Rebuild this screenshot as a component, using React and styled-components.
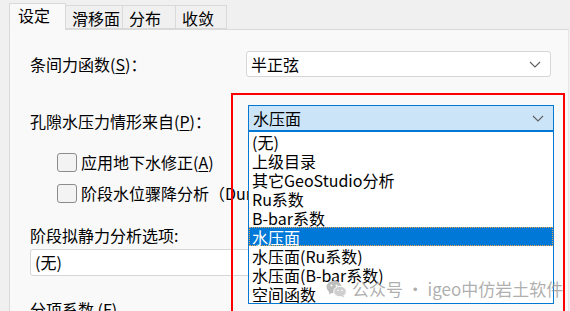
import styled, { createGlobalStyle } from 'styled-components'

const GlobalStyle = createGlobalStyle`
    html, body {
        margin: 0;
        padding: 0;
        background: #f0f0f0;
    }
    body {
        font-family: 'Noto Sans CJK SC', 'Noto Sans', sans-serif;
        font-size: 16px;
        color: #000;
    }
`

const tabs = [
    { label: '设定', width: 57, active: true },
    { label: '滑移面', width: 58 },
    { label: '分布', width: 54 },
    { label: '收敛', width: 52 },
]

const options = [
    '(无)',
    '上级目录',
    '其它GeoStudio分析',
    'Ru系数',
    'B-bar系数',
    '水压面',
    '水压面(Ru系数)',
    '水压面(B-bar系数)',
    '空间函数',
]

function Chevron() {
    return (
        <svg width="12" height="7" viewBox="0 0 12 7">
            <polyline
                points="1,1 6,6 11,1"
                fill="none"
                stroke="#5f5f5f"
                strokeWidth="1.1"
            />
        </svg>
    )
}

function WeChatMark() {
    return (
        <svg width="21" height="18" viewBox="0 0 21 18">
            <ellipse cx="8" cy="7" rx="7.5" ry="6.3" fill="#bdbdbd" />
            <path d="M3.5 11.5 L2.8 14.5 L6.5 12.6 Z" fill="#bdbdbd" />
            <ellipse cx="14" cy="11.5" rx="6.3" ry="5.3" fill="#cfcfcf" stroke="#fff" strokeWidth="1" />
            <path d="M17.5 15.5 L18.5 17.8 L15.5 16.3 Z" fill="#cfcfcf" />
            <circle cx="5.5" cy="5.5" r="1" fill="#fff" />
            <circle cx="10.5" cy="5.5" r="1" fill="#fff" />
            <circle cx="12" cy="10.5" r="0.8" fill="#fff" />
            <circle cx="16" cy="10.5" r="0.8" fill="#fff" />
        </svg>
    )
}

export default function App() {
    return (
        <Window>
            <GlobalStyle />
            <TabStrip>
                {tabs.map((t) => (
                    <Tab key={t.label} $active={t.active} $w={t.width}>
                        {t.label}
                    </Tab>
                ))}
            </TabStrip>

            <Panel>
                <FieldRow $top={21}>
                    <Label>
                        条间力函数(<U>S</U>)：
                    </Label>
                    <Combo>
                        <ComboText>半正弦</ComboText>
                        <Chevron />
                    </Combo>
                </FieldRow>

                <FieldRow $top={28}>
                    <Label $nudge={7}>
                        孔隙水压力情形来自(<U>P</U>)：
                    </Label>
                    <DropWrap>
                        <Combo $open>
                            <ComboText>水压面</ComboText>
                            <Chevron />
                        </Combo>
                        <OptionList>
                            {options.map((o, i) => (
                                <OptionItem key={o} $selected={i === 5}>
                                    {o}
                                </OptionItem>
                            ))}
                        </OptionList>
                        <Highlight />
                    </DropWrap>
                </FieldRow>

                <CheckRow $top={21}>
                    <CheckBox />
                    <span>
                        应用地下水修正(<U>A</U>)
                    </span>
                </CheckRow>
                <CheckRow $top={10}>
                    <CheckBox />
                    <span>阶段水位骤降分析（Duncan、Wright 和 Wong，1990）</span>
                </CheckRow>

                <Label $top={22}>阶段拟静力分析选项:</Label>
                <WideCombo>
                    <ComboText>(无)</ComboText>
                </WideCombo>

                <Label $top={24}>分项系数 (F)</Label>
            </Panel>

            <Watermark>
                <WeChatMark />
                <span>公众号 · igeo中仿岩土软件</span>
            </Watermark>
        </Window>
    )
}

const Window = styled.div`
    position: relative;
    width: 570px;
    height: 311px;
    overflow: hidden;
    background: #f0f0f0;
    display: flex;
    flex-direction: column;
`

const TabStrip = styled.div`
    display: flex;
    align-items: flex-end;
    height: 29px;
    padding-left: 9px;
    flex-shrink: 0;
    position: relative;
    z-index: 1;
`

const Tab = styled.div`
    box-sizing: border-box;
    width: ${(p) => p.$w}px;
    height: ${(p) => (p.$active ? 27 : 24)}px;
    margin-bottom: ${(p) => (p.$active ? -1 : 0)}px;
    padding-left: ${(p) => (p.$active ? 8 : 6)}px;
    padding-top: ${(p) => (p.$active ? 2 : 3)}px;
    line-height: 19px;
    font-size: 16px;
    background: ${(p) => (p.$active ? '#f9f9f9' : '#f0f0f0')};
    border: 1px solid #d9d9d9;
    border-bottom: ${(p) => (p.$active ? 'none' : '1px solid #d9d9d9')};
    margin-left: ${(p) => (p.$active ? 0 : -1)}px;
    white-space: nowrap;
`

const Panel = styled.div`
    flex: 1;
    margin-left: 9px;
    margin-right: 1px;
    padding-left: 20px;
    background: #f9f9f9;
    border-left: 1px solid #dadada;
    border-top: 1px solid #dadada;
    border-right: 1px solid #e6e6e6;
    display: flex;
    flex-direction: column;
    align-items: flex-start;
`

const FieldRow = styled.div`
    display: grid;
    grid-template-columns: 216px auto;
    align-items: ${(p) => (p.$align ? p.$align : 'center')};
    margin-top: ${(p) => p.$top}px;
`

const Label = styled.div`
    line-height: 19px;
    white-space: nowrap;
    margin-top: ${(p) => p.$top || 0}px;
    padding-top: ${(p) => p.$nudge || 0}px;
`

const U = styled.span`
    text-decoration: underline;
    text-underline-offset: 2px;
`

const Combo = styled.div`
    box-sizing: border-box;
    width: ${(p) => (p.$open ? 306 : 305)}px;
    height: 26px;
    margin-left: ${(p) => (p.$open ? 2 : 0)}px;
    padding: 0 9px 0 4px;
    display: flex;
    align-items: center;
    justify-content: space-between;
    background: ${(p) => (p.$open ? '#cce4f7' : '#ffffff')};
    border: 1px solid ${(p) => (p.$open ? '#0078d4' : '#d6d6d6')};
    border-radius: ${(p) => (p.$open ? 0 : 3)}px;
`

const ComboText = styled.span`
    line-height: 19px;
    white-space: nowrap;
`

const WideCombo = styled(Combo)`
    width: 521px;
    height: 27px;
    margin-top: 4px;
`

const DropWrap = styled.div`
    position: relative;
    z-index: 3;
`

const OptionList = styled.div`
    position: absolute;
    left: 2px;
    top: 26px;
    width: 306px;
    box-sizing: border-box;
    background: #fff;
    border: 1px solid #0078d4;
    display: flex;
    flex-direction: column;
`

const OptionItem = styled.div`
    box-sizing: border-box;
    height: 19px;
    line-height: 18px;
    padding-left: 2px;
    white-space: nowrap;
    color: ${(p) => (p.$selected ? '#ffffff' : '#000000')};
    background: ${(p) => (p.$selected ? '#0078d7' : 'transparent')};
    border: 1px dotted ${(p) => (p.$selected ? '#e9a74a' : 'transparent')};
`

const Highlight = styled.div`
    position: absolute;
    left: -15px;
    top: -12px;
    width: 334px;
    height: 260px;
    box-sizing: border-box;
    border: 2px solid #ff0000;
    pointer-events: none;
`

const CheckRow = styled.div`
    display: flex;
    align-items: center;
    gap: 4px;
    height: 21px;
    margin-top: ${(p) => p.$top}px;
    margin-left: 27px;
    line-height: 19px;
    white-space: nowrap;
`

const CheckBox = styled.div`
    box-sizing: border-box;
    width: 20px;
    height: 19px;
    border: 1px solid #8c8c8c;
    border-radius: 3px;
    background: #f3f3f3;
    flex-shrink: 0;
`

const Watermark = styled.div`
    position: absolute;
    left: 326px;
    top: 279px;
    z-index: 5;
    display: flex;
    align-items: center;
    gap: 5px;
    font-size: 17px;
    line-height: 19px;
    color: rgba(140, 140, 140, 0.7);
    white-space: nowrap;
`
